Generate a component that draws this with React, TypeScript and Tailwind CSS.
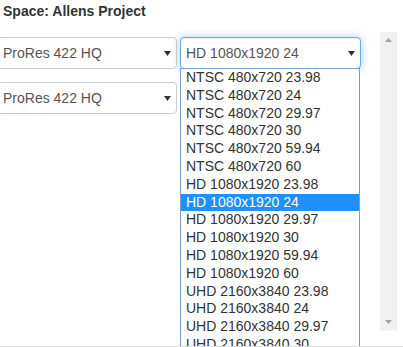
import React from "react";

const options = [
  "NTSC 480x720 23.98",
  "NTSC 480x720 24",
  "NTSC 480x720 29.97",
  "NTSC 480x720 30",
  "NTSC 480x720 59.94",
  "NTSC 480x720 60",
  "HD 1080x1920 23.98",
  "HD 1080x1920 24",
  "HD 1080x1920 29.97",
  "HD 1080x1920 30",
  "HD 1080x1920 59.94",
  "HD 1080x1920 60",
  "UHD 2160x3840 23.98",
  "UHD 2160x3840 24",
  "UHD 2160x3840 29.97",
  "UHD 2160x3840 30",
  "UHD 2160x3840 59.94",
  "UHD 2160x3840 60",
];

function Caret() {
  return (
    <svg width="7" height="5" viewBox="0 0 7 5" className="shrink-0">
      <polygon points="0,0 7,0 3.5,5" fill="#333" />
    </svg>
  );
}

function Select({ label }: { label: string }) {
  return (
    <div className="flex h-[32px] items-center justify-between rounded-[4px] border border-[#ccc] bg-white pl-[5px] pr-[5px] text-[14px] text-[#555]">
      <span>{label}</span>
      <Caret />
    </div>
  );
}

export default function App() {
  return (
    <div className="relative h-[347px] w-[403px] overflow-hidden border-b border-[#ddd] bg-white font-['Liberation_Sans',Arial,sans-serif]">
      <div className="flex items-start">
        <div className="w-[380px] shrink-0">
          <div className="pl-[3px] pt-[1px] text-[14px] font-bold leading-[20px] text-[#333]">
            Space: Allens Project
          </div>
          <div className="ml-[-3px] mt-[16px] flex gap-[3px]">
            <div className="flex w-[180px] flex-col gap-[13px]">
              <Select label="ProRes 422 HQ" />
              <Select label="ProRes 422 HQ" />
            </div>
            <div className="relative w-[181px]">
              <div className="flex h-[32px] items-center justify-between rounded-[4px] border border-[#66afe9] bg-white pl-[5px] pr-[5px] text-[14px] text-[#555] shadow-[inset_0_1px_1px_rgba(0,0,0,0.075),0_0_8px_rgba(102,175,233,0.6)]">
                <span>HD 1080x1920 24</span>
                <Caret />
              </div>
              <div className="absolute left-0 top-[31px] z-10 w-[180px] border border-[#7b9bd1] bg-white">
                {options.map((o) => (
                  <div
                    key={o}
                    className={
                      o === "HD 1080x1920 24"
                        ? "h-[17.8px] whitespace-nowrap bg-[#1e90ff] pl-[5px] text-[14px] leading-[17.8px] text-white"
                        : "h-[17.8px] whitespace-nowrap pl-[5px] text-[14px] leading-[17.8px] text-[#333]"
                    }
                  >
                    {o}
                  </div>
                ))}
              </div>
            </div>
          </div>
        </div>
        <div className="mt-[32px] flex h-[299px] w-[17px] shrink-0 flex-col items-center justify-between bg-[#f1f1f1] pb-[7px] pt-[6px]">
          <svg width="7" height="4" viewBox="0 0 7 4">
            <polygon points="3.5,0 7,4 0,4" fill="#a3a3a3" />
          </svg>
          <svg width="7" height="4" viewBox="0 0 7 4">
            <polygon points="0,0 7,0 3.5,4" fill="#a3a3a3" />
          </svg>
        </div>
      </div>
    </div>
  );
}
